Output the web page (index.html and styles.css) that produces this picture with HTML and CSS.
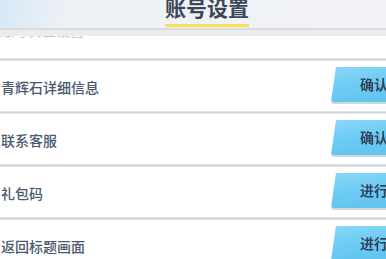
FILE: index.html
```html
<!DOCTYPE html>
<html>
<head>
<meta charset="utf-8">
<link rel="stylesheet" href="styles.css">
</head>
<body>
<div class="page">
  <div class="header">
    <div class="title-wrap">
      <div class="title">账号设置</div>
      <div class="underline"></div>
    </div>
  </div>
  <div class="hline"></div>
  <div class="band"></div>
  <div class="partial"><span class="partial-text">账号安全设置</span></div>
  <div class="sep"></div>
  <div class="row">
    <span class="label">青辉石详细信息</span>
    <div class="btn"><span>确认</span></div>
  </div>
  <div class="sep"></div>
  <div class="row">
    <span class="label">联系客服</span>
    <div class="btn"><span>确认</span></div>
  </div>
  <div class="sep"></div>
  <div class="row">
    <span class="label">礼包码</span>
    <div class="btn"><span>进行</span></div>
  </div>
  <div class="sep"></div>
  <div class="row">
    <span class="label">返回标题画面</span>
    <div class="btn"><span>进行</span></div>
  </div>
</div>
</body>
</html>
```
FILE: styles.css
```css
html, body {
  margin: 0;
  padding: 0;
  width: 386px;
  height: 259px;
  overflow: hidden;
  background: #ffffff;
  font-family: "Noto Sans CJK SC", "Noto Sans", sans-serif;
}
.page {
  display: flex;
  flex-direction: column;
  width: 386px;
}
.header {
  height: 28px;
  background: linear-gradient(100deg, #d6e8f6 0px, #e4eef7 40px, #eef1f5 70px, #f1f3f6 100%);
  display: flex;
  justify-content: center;
  padding-left: 28px;
  overflow: hidden;
}
.title-wrap {
  display: flex;
  flex-direction: column;
  align-items: center;
  width: 84px;
}
.title {
  font-size: 21px;
  font-weight: 700;
  color: #3b4658;
  line-height: 21px;
  margin-top: -3px;
}
.underline {
  margin-top: 6px;
  width: 84px;
  height: 3px;
  background: #f6e05a;
  border-radius: 1px;
}
.hline {
  height: 2px;
  background: #d9dadc;
}
.band {
  height: 6px;
  background: #ececee;
}
.partial {
  height: 22px;
  background: #ffffff;
  overflow: hidden;
}
.partial-text {
  display: block;
  font-size: 14px;
  line-height: 14px;
  margin-top: -13px;
  color: #c4c7cd;
}
.sep {
  height: 3px;
  background: linear-gradient(#e6e6e8, #d6d6d8, #e8e8ea);
}
.row {
  height: 50px;
  display: flex;
  align-items: center;
  justify-content: space-between;
  background: #ffffff;
}
.label {
  font-size: 14px;
  font-weight: 500;
  color: #4a5870;
  padding-left: 1px;
  margin-top: 2px;
}
.btn {
  align-self: flex-start;
  margin-top: 6px;
  margin-right: -30px;
  width: 85px;
  height: 35px;
  filter: drop-shadow(0 2px 0 rgba(120, 140, 160, 0.35));
  position: relative;
}
.btn::before {
  content: "";
  position: absolute;
  inset: 0;
  background: linear-gradient(170deg, #8ad8f8 0%, #6ccbf2 45%, #5cc2ee 100%);
  clip-path: polygon(5px 0, 100% 0, 100% 100%, 0 100%);
  border-radius: 3px;
}
.btn span {
  position: relative;
  display: block;
  padding-left: 29px;
  line-height: 35px;
  font-size: 14px;
  font-weight: 700;
  color: #34425a;
}
```
